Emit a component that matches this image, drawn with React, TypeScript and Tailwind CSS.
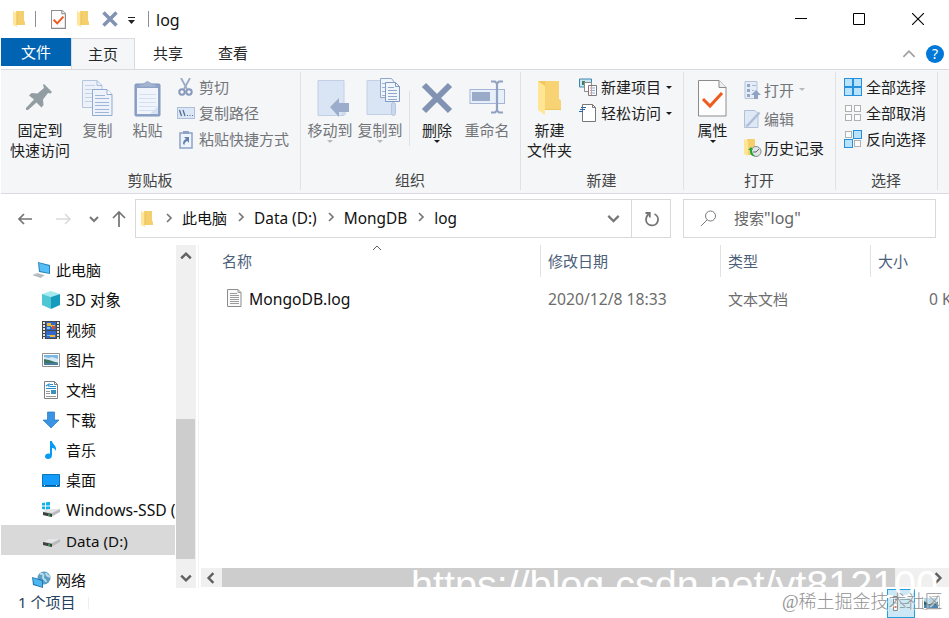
import type { ReactNode } from "react";
import clsx from "clsx";

type IconProps = { w: number; h: number; children: ReactNode; className?: string };

function Icon({ w, h, children, className }: IconProps) {
  return (
    <svg width={w} height={h} viewBox={`0 0 ${w} ${h}`} fill="none" className={clsx("block shrink-0", className)}>
      {children}
    </svg>
  );
}

/* ---------- shared glyphs ---------- */

function SmallFolder() {
  return (
    <Icon w={14} h={18}>
      <path d="M4 1h8v10l1 1v3H4z" fill="#f5cf6c" />
      <path d="M1 1l4 2v14l-4-2z" fill="#ffe69c" />
      <path d="M5 3v12" stroke="#e8bd55" />
    </Icon>
  );
}

function Caret({ dim }: { dim?: boolean }) {
  return (
    <Icon w={6} h={3}>
      <path d="M0 0h6L3 3z" fill={dim ? "#b6b8ba" : "#1c1c1c"} />
    </Icon>
  );
}

type ChevronProps = { dir: "up" | "down" | "left" | "right"; color?: string; size?: number; stroke?: number };

function Chevron({ dir, color = "#606060", size = 10, stroke = 2 }: ChevronProps) {
  const paths = {
    up: "M1 7l4-4 4 4",
    down: "M1 3l4 4 4-4",
    left: "M7 1L3 5l4 4",
    right: "M3 1l4 4-4 4",
  };
  return (
    <svg width={size} height={size} viewBox="0 0 10 10" fill="none" className="block shrink-0">
      <path d={paths[dir]} stroke={color} strokeWidth={stroke} />
    </svg>
  );
}

/* ---------- large ribbon icons ---------- */

const PinIcon = (
  <Icon w={28} h={28} className="-mt-px">
    <path d="M18 0l8 8-1.500 1.500L22 9l-5 6.500.500 5.500-2 2.500-5-5L2 26H0v-2l8-8.500-5-4L5.500 9l6 .500L18 4l-1-3z" fill="#929da3" />
  </Icon>
);

const CopyIcon = (
  <Icon w={31} h={37}>
    <path d="M.5.5H15l5 5v22H.5z" fill="#edf2fa" stroke="#b3c5df" />
    <path d="M15 .5v5h5" stroke="#a9bdd8" />
    <path d="M3 5.500h10M3 9.500h14M3 13.500h14M3 17.500h8M3 21.500h8" stroke="#c3d1e6" />
    <path d="M10.500 9.500H25l5 5v21H10.500z" fill="#eef3fb" stroke="#8fabd1" />
    <path d="M25 9.500v5h5" fill="#fff" stroke="#8fabd1" />
    <path d="M13 15.500h10M13 18.500h14M13 22.500h14M13 25.500h14M13 29.500h14M13 32.500h14" stroke="#9fb6d6" />
  </Icon>
);

const PasteIcon = (
  <Icon w={27} h={37}>
    <rect x="1" y="4" width="25" height="32" rx="1" fill="#8fa3c8" stroke="#8095bb" />
    <path d="M3 8h21v26H3z" fill="#f0f5fd" />
    <path d="M24 26v8h-8z" fill="#d6e1f2" />
    <path d="M5 14.500h17M5 18.500h17M5 22.500h17M5 26.500h17M5 30.500h17" stroke="#d4e0f1" />
    <path d="M5 7V5l4-1 2-1a3 3 0 015 0l2 1 4 1v2z" fill="#a4b5d2" stroke="#8da0c4" strokeWidth=".7" />
  </Icon>
);

const MoveIcon = (
  <Icon w={33} h={37} className="translate-x-[3px]">
    <path d="M1 .500h26v35H1z" fill="#d9e5f5" stroke="#c1d0e5" />
    <path d="M25 23h4v12h-4z" fill="#cddbee" />
    <path d="M13 27l9-9v5h10v9H22v5z" fill="#9badca" />
  </Icon>
);

const CopyToIcon = (
  <Icon w={34} h={39} className="-mt-[2px] translate-x-[3px]">
    <path d="M1 2.500h26v34H1z" fill="#d9e5f5" stroke="#c1d0e5" />
    <rect x="25.500" y="24.500" width="4" height="13" rx="2" fill="#c8d7eb" stroke="#b4c6df" />
    <path d="M14.500 .500h11l3 4v15h-14z" fill="#f0f5fc" stroke="#8fa7ca" />
    <path d="M16 5.500h4M16 9.500h3M16 13.500h3M16 17.500h3" stroke="#9eb3d2" />
    <path d="M19.500 4.500h10l4 4v15h-14z" fill="#f0f5fc" stroke="#7f99c0" />
    <path d="M29.500 4.500v4h4" stroke="#7f99c0" />
    <path d="M22 9.500h6M22 12.500h9M22 15.500h9M22 18.500h9M22 21.500h9" stroke="#8fa7ca" />
  </Icon>
);

const DeleteIcon = (
  <Icon w={32} h={32}>
    <path d="M3 3l26 26M29 3L3 29" stroke="#8192b3" strokeWidth="6" />
  </Icon>
);

const RenameIcon = (
  <Icon w={37} h={34} className="-mt-[2px]">
    <rect x="1" y="9.500" width="34.500" height="14" fill="#e7effb" stroke="#a5b5d3" />
    <rect x="3" y="12" width="18" height="9" fill="#9aabca" />
    <path d="M22 1.500h4l2 2 2-2h4M22 32.500h4l2-2 2 2h4M28 3v28" stroke="#91a1c0" strokeWidth="2.200" />
  </Icon>
);

const NewFolderIcon = (
  <Icon w={26} h={36}>
    <path d="M1 1h21v18l2 2v9H8l-1 4z" fill="#efc75f" />
    <path d="M8 1h14v18l2 2v8H8z" fill="#f7d373" />
    <path d="M1 1l7 5v29l-7-5z" fill="#ffe594" />
  </Icon>
);

function CheckSheet({ small }: { small?: boolean }) {
  return (
    <svg width={small ? 15 : 29} height={small ? 19 : 37} viewBox="0 0 29 37" fill="none" className="block">
      <path d="M.5.5h20.500l7 7v28.500H.5z" fill="#fdfdfd" stroke="#8c8c8c" strokeWidth={small ? 2.5 : 1} />
      <path d="M21 .500v7h7" fill="#eee" stroke="#8c8c8c" strokeWidth={small ? 2 : 1} />
      <path d="M5 19l7 7L24 13" stroke="#f05a1c" strokeWidth={small ? 4 : 3} />
    </svg>
  );
}

/* ---------- small ribbon icons ---------- */

const CutIcon = (
  <Icon w={18} h={18}>
    <path d="M4 0l6 11M13 0L7 11" stroke="#9baac4" strokeWidth="1.800" />
    <circle cx="5" cy="14" r="2.700" stroke="#8799bb" strokeWidth="2" />
    <circle cx="12" cy="14" r="2.700" stroke="#8799bb" strokeWidth="2" />
  </Icon>
);

const PathIcon = (
  <Icon w={18} h={12}>
    <rect x=".500" y=".500" width="17" height="11" fill="#dbe6f6" stroke="#afbed8" />
    <path d="M2.500 3l2 6M6 3l2 6" stroke="#566d96" strokeWidth="1.300" />
    <path d="M10 8.500h1M12.500 8.500h1M15 8.500h1" stroke="#566d96" />
  </Icon>
);

const ShortcutIcon = (
  <Icon w={18} h={19}>
    <path d="M3 3h12v15H3z" fill="#eef4fc" stroke="#8da2c6" strokeWidth="1.500" />
    <path d="M6 1h6v3H6z" fill="#8da2c6" />
    <path d="M6 14c0-3 1-4 3-5L7 7h5v6l-1.500-2C8 12 7.500 13 7.500 15z" fill="#6681b0" />
  </Icon>
);

const NewItemIcon = (
  <Icon w={18} h={18}>
    <path d="M.500 1h12v8H.500z" fill="#c8e6f4" stroke="#3f88ad" />
    <path d="M3 3h3v4H3z" fill="#477d63" />
    <path d="M5.500 4.500h7v9h-7z" fill="#fff" stroke="#8b8b8b" />
    <path d="M9.500 7.500h8v10h-8z" fill="#fff" stroke="#7a7a7a" />
    <path d="M11 10h5M11 12.500h5M11 15h5" stroke="#87a8d7" />
    <path d="M12.500 8v9" stroke="#e59a8b" />
  </Icon>
);

const EasyAccessIcon = (
  <Icon w={18} h={18}>
    <path d="M3.500 .500h10l3 3v14h-13z" fill="#fff" stroke="#777" />
    <path d="M13.500.500v3h3" stroke="#777" />
    <path d="M2 3.500h5M1 5.500h5M0 7.500h4" stroke="#2868a8" />
  </Icon>
);

const OpenIcon = (
  <Icon w={18} h={18}>
    <path d="M1 .500h12v17H1z" fill="#e5edf9" stroke="#b6c3d9" />
    <path d="M3 3h3v3H3zM3 8h3v3H3zM3 13h3v3H3z" fill="#94a6c6" />
    <path d="M8 4.500h4M8 9.500h2" stroke="#a9b8d1" />
    <path d="M12 9l5 5h-3v4h-4v-4H7z" fill="#8fa2c4" />
  </Icon>
);

const EditIcon = (
  <Icon w={18} h={18}>
    <path d="M.500.500H11l3 3v14H.500z" fill="#dfe8f5" stroke="#b1c0d8" />
    <path d="M15.500 2.500L4 15l-2 1" stroke="#b0bfd8" strokeWidth="2.500" />
  </Icon>
);

const HistoryIcon = (
  <Icon w={18} h={18}>
    <path d="M3 0h8v16H3z" fill="#f5cf6c" />
    <path d="M0 0l4 2v15l-4-2z" fill="#ffe594" />
    <circle cx="12" cy="12.500" r="5" fill="#e1e5e6" stroke="#858b8e" />
    <path d="M12 13l3-3M12 13H9" stroke="#666" />
    <path d="M4 11l3-3 2 3H8c0 3 1 4 3 6-4 0-5-2-5-6z" fill="#21a33a" />
  </Icon>
);

// four tiles, each either highlighted or plain
function TilesIcon({ on }: { on: boolean[] }) {
  return (
    <Icon w={18} h={18}>
      {on.map((active, i) => {
        const x = (i % 2) * 9 + (active ? 0.5 : 1.5);
        const y = Math.floor(i / 2) * 9 + (active ? 0.5 : 1.5);
        const size = active ? 8 : 6;
        return <rect key={i} x={x} y={y} width={size} height={size} fill={active ? "#b9e2fc" : "#fcfcfc"} stroke={active ? "#2690dd" : "#b0b0b0"} />;
      })}
    </Icon>
  );
}

/* ---------- ribbon ---------- */

type BigProps = { icon: ReactNode; lines: string[]; caret?: boolean; dim?: boolean; className?: string };

function BigButton({ icon, lines, caret, dim, className }: BigProps) {
  return (
    <button className={clsx("flex shrink-0 flex-col items-center", dim ? "text-[#737578]" : "text-[#1e1e1e]", className)}>
      <span className="mb-px flex h-[42px] items-center">{icon}</span>
      {lines.map((l) => (
        <span key={l} className="block h-5 leading-5 whitespace-nowrap">{l}</span>
      ))}
      {caret && <Caret dim={dim} />}
    </button>
  );
}

type SmallProps = { icon: ReactNode; label: string; caret?: boolean; dim?: boolean; tall?: boolean };

function SmallButton({ icon, label, caret, dim, tall }: SmallProps) {
  return (
    <button className={clsx("flex items-center whitespace-nowrap", tall ? "h-[29px]" : "h-[26px]", dim ? "text-[#737578]" : "text-[#1e1e1e]")}>
      <span className={clsx("flex w-[18px] justify-center", tall ? "mr-[2px]" : "mr-1")}>{icon}</span>
      <span className="leading-5">{label}</span>
      {caret && <span className="ml-[5px]"><Caret dim={dim} /></span>}
    </button>
  );
}

function Group({ title, className, children }: { title: string; className: string; children: ReactNode }) {
  return (
    <section className={clsx("flex h-[118px] shrink-0 flex-col border-r border-[#dfe1e4]", className)}>
      <div className="flex h-[98px] items-start">{children}</div>
      <div className="pr-px text-center leading-5 text-[#444]">{title}</div>
    </section>
  );
}

function Ribbon() {
  return (
    <div className="flex h-[125px] border-y border-[#d9dbde] bg-[#f4f6f8] pt-[2px]">
      <Group title="剪贴板" className="w-[300px]">
        <BigButton className="mt-[5px] ml-[5px] w-[68px]" icon={PinIcon} lines={["固定到", "快速访问"]} />
        <BigButton className="mt-[5px] -ml-px w-[49px]" icon={CopyIcon} lines={["复制"]} dim />
        <BigButton className="mt-[5px] w-[51px]" icon={PasteIcon} lines={["粘贴"]} dim />
        <div className="mt-[2px] ml-1">
          <SmallButton icon={CutIcon} label="剪切" dim />
          <SmallButton icon={PathIcon} label="复制路径" dim />
          <SmallButton icon={ShortcutIcon} label="粘贴快捷方式" dim />
        </div>
      </Group>
      <Group title="组织" className="w-[220px]">
        <BigButton className="mt-[5px] ml-1 w-[50px]" icon={MoveIcon} lines={["移动到"]} caret dim />
        <BigButton className="mt-[5px] w-[50px]" icon={CopyToIcon} lines={["复制到"]} caret dim />
        <div className="mt-[19px] ml-1 h-[55px] w-px bg-[#dfe1e4]" />
        <BigButton className="mt-[5px] ml-[2px] w-[50px]" icon={DeleteIcon} lines={["删除"]} caret />
        <BigButton className="mt-[5px] w-[50px]" icon={RenameIcon} lines={["重命名"]} dim />
      </Group>
      <Group title="新建" className="w-[163px]">
        <BigButton className="mt-[5px] w-[57px]" icon={NewFolderIcon} lines={["新建", "文件夹"]} />
        <div className="mt-[2px] ml-[1px]">
          <SmallButton icon={NewItemIcon} label="新建项目" caret />
          <SmallButton icon={EasyAccessIcon} label="轻松访问" caret />
        </div>
      </Group>
      <Group title="打开" className="w-[152px]">
        <BigButton className="mt-[5px] w-[57px]" icon={<CheckSheet />} lines={["属性"]} caret />
        <div className="mt-[3px] ml-[3px]">
          <SmallButton icon={OpenIcon} label="打开" caret dim tall />
          <SmallButton icon={EditIcon} label="编辑" dim tall />
          <SmallButton icon={HistoryIcon} label="历史记录" tall />
        </div>
      </Group>
      <Group title="选择" className="w-[102px]">
        <div className="mt-[2px] ml-2">
          <SmallButton icon={<TilesIcon on={[true, true, true, true]} />} label="全部选择" />
          <SmallButton icon={<TilesIcon on={[false, false, false, false]} />} label="全部取消" />
          <SmallButton icon={<TilesIcon on={[false, true, true, false]} />} label="反向选择" />
        </div>
      </Group>
    </div>
  );
}

/* ---------- title bar and tabs ---------- */

function TitleBar() {
  return (
    <header className="flex h-[38px] items-center pl-[11px]">
      <SmallFolder />
      <span className="ml-[9px] h-4 w-px bg-[#8f8f8f]" />
      <span className="ml-[15px]"><CheckSheet small /></span>
      <span className="ml-[10px]"><SmallFolder /></span>
      <Icon w={16} h={16} className="ml-3">
        <path d="M1.500 1.500l13 13M14.500 1.500l-13 13" stroke="#8192b3" strokeWidth="3.500" />
      </Icon>
      <Icon w={7} h={8} className="mt-1 ml-[10px]">
        <path d="M0 .500h7" stroke="#222" />
        <path d="M0 3h7L3.500 7z" fill="#222" />
      </Icon>
      <span className="ml-[13px] h-4 w-px bg-[#8f8f8f]" />
      <span className="ml-[7px] pt-px text-base text-[#111]">log</span>
      <div className="ml-auto flex items-center">
        <Icon w={12} h={12}>
          <path d="M0 5.500h12" stroke="#000" />
        </Icon>
        <Icon w={12} h={12} className="ml-[46px]">
          <path d="M.500.500h11v11H.500z" stroke="#000" />
        </Icon>
        <Icon w={12} h={12} className="mr-[25px] ml-[47px]">
          <path d="M0 0l12 12M12 0L0 12" stroke="#000" strokeWidth="1.100" />
        </Icon>
      </div>
    </header>
  );
}

function Tabs() {
  return (
    <nav className="flex h-[31px] text-[#262626]">
      <div className="flex h-7 w-[70px] items-center justify-center bg-[#0064b3] text-white">文件</div>
      <div className="-mb-px flex h-8 w-[64px] items-center justify-center border border-b-0 border-[#d9dbde] bg-[#f4f6f8]">主页</div>
      <div className="flex w-[66px] items-center justify-center">共享</div>
      <div className="flex w-[64px] items-center justify-center">查看</div>
      <div className="ml-auto flex items-center pr-[5px]">
        <Chevron dir="up" size={14} color="#a0a0a0" stroke={1.2} />
        <span className="ml-[10px] flex size-[18px] items-center justify-center rounded-full bg-[#0078d7] text-sm leading-none text-white">?</span>
      </div>
    </nav>
  );
}

/* ---------- address bar ---------- */

const CRUMBS = ["此电脑", "Data (D:)", "MongDB", "log"];

function AddressBar() {
  return (
    <div className="flex h-[39px] items-center pr-[13px]">
      <div className="flex w-[134px] items-center">
        <Icon w={16} h={14} className="ml-4">
          <path d="M15 7H2M7 2L2 7l5 5" stroke="#737373" strokeWidth="1.700" />
        </Icon>
        <Icon w={16} h={14} className="ml-[23px]">
          <path d="M0 7h14M9 2l5 5-5 5" stroke="#dadada" strokeWidth="1.500" />
        </Icon>
        <span className="ml-[17px]"><Chevron dir="down" color="#777" /></span>
        <Icon w={14} h={16} className="mt-px ml-[13px]">
          <path d="M7 16V1M1 7l6-6 6 6" stroke="#737373" strokeWidth="1.700" />
        </Icon>
      </div>
      <div className="flex h-[39px] w-[536px] border border-[#d9d9d9]">
        <div className="flex flex-1 items-center pl-1 text-[#111]">
          <SmallFolder />
          {CRUMBS.map((c, i) => (
            <span key={c} className={clsx("flex items-center whitespace-nowrap", i === 0 && "pl-px")}>
              <span className="-mt-[2px] mr-[8px] ml-[9px]"><Chevron dir="right" color="#777" stroke={1.7} /></span>
              <span className={i === 0 ? "text-[15px]" : "pt-px text-[15.4px]"}>{c}</span>
            </span>
          ))}
          <span className="mr-[11px] ml-auto"><Chevron dir="down" size={13} color="#777" stroke={1.7} /></span>
        </div>
        <div className="flex w-[39px] items-center justify-center border-l border-[#d9d9d9]">
          <Icon w={16} h={16} className="ml-[2px]">
            <path d="M10.500 3A6 6 0 112 8.500C2 6.500 3 4.500 4.500 3M1.500 2h4.300v4.500" stroke="#737373" strokeWidth="1.800" />
          </Icon>
        </div>
      </div>
      <div className="ml-3 flex h-[39px] flex-1 items-center border border-[#d9d9d9] pl-4 text-[#666]">
        <Icon w={17} h={17}>
          <circle cx="10.500" cy="6" r="5" stroke="#7a7a7a" />
          <path d="M7 10L1 16" stroke="#7a7a7a" />
        </Icon>
        <span className="-mt-px ml-[17px]">搜索<span className="text-base">"log"</span></span>
      </div>
    </div>
  );
}

/* ---------- navigation tree ---------- */

const Drive = (
  <>
    <path d="M1 11l5-3h12v3l-9 5-8-2z" fill="#b9bcbd" />
    <path d="M1 11l5-3h12l-8 4z" fill="#e4e5e6" />
    <path d="M1 11l9 2v3l-9-2z" fill="#3c4244" />
    <path d="M6 14h2" stroke="#39e34b" />
  </>
);

const Screen = (
  <>
    <path d="M6 1l12 3v9L7 11z" fill="#2784bb" />
    <path d="M7 2l10 3v7L8 10z" fill="#55bdf7" />
  </>
);

type TreeItem = { label: string; icon: ReactNode; root?: boolean; selected?: boolean; className?: string };

const TREE: TreeItem[] = [
  {
    label: "此电脑",
    root: true,
    icon: (
      <Icon w={19} h={18}>
        {Screen}
        <path d="M0 14l5-2 8 2-4 3z" fill="#c8cdd0" />
        <path d="M2 14l7 2M5 13l6 2" stroke="#929ba0" strokeWidth=".6" />
      </Icon>
    ),
  },
  {
    label: "3D 对象",
    className: "pt-px text-[15.4px]",
    icon: (
      <Icon w={18} h={18}>
        <path d="M0 3l9-3 9 3-9 3z" fill="#a3eaf0" />
        <path d="M0 3l9 3v12l-9-4z" fill="#4ec6d4" />
        <path d="M9 6l9-3v11l-9 4z" fill="#159cbd" />
      </Icon>
    ),
  },
  {
    label: "视频",
    icon: (
      <Icon w={18} h={18}>
        <path d="M0 0h18v18H0z" fill="#44474a" />
        <path d="M2 1v17M16 1v17" stroke="#e5e5e5" strokeWidth="2" strokeDasharray="2 1" />
        <path d="M4 1h10v8H4zM4 10h10v7H4z" fill="#3468c8" />
        <path d="M5 2h4v3H5zM9 4h4v2H9zM8 14h5v2H8z" fill="#f0ba28" />
        <path d="M10 5h3v3h-3z" fill="#d64f2e" />
        <path d="M5 6h3v2H5zM5 14h3v1H5z" fill="#72c6e8" />
      </Icon>
    ),
  },
  {
    label: "图片",
    icon: (
      <Icon w={18} h={14}>
        <path d="M.500.500h17v13H.500z" fill="#fff" stroke="#929292" />
        <path d="M2 2h14v10H2z" fill="#7ab7e5" />
        <path d="M2 4l5 1 3-1 6 2v3H2z" fill="#d7eaf6" />
        <path d="M2 6l5 1 9 3v1H2z" fill="#3c7467" />
        <path d="M2 10h14v2H2z" fill="#497da0" />
      </Icon>
    ),
  },
  {
    label: "文档",
    icon: (
      <Icon w={18} h={18}>
        <path d="M2.500 .500h10l3 3v14h-13z" fill="#fff" stroke="#808080" />
        <path d="M12.500.500v3h3" stroke="#808080" />
        <path d="M4 5l3-2v3M8 3.500h3M8 5.500h6M4 7.500h10" stroke="#258dd1" strokeWidth="1.200" />
        <path d="M4 10.500h4M4 12.500h4M4 15.500h10" stroke="#999" />
        <path d="M9 9h5v4H9z" fill="#3d90bc" />
      </Icon>
    ),
  },
  {
    label: "下载",
    icon: (
      <Icon w={18} h={18}>
        <path d="M5.500 1h7v8h4.500l-8 8-8-8h4.500z" fill="#3a94e3" stroke="#2479bf" strokeWidth=".7" />
      </Icon>
    ),
  },
  {
    label: "音乐",
    icon: (
      <Icon w={18} h={18}>
        <path d="M8 0h2c0 3 5 4 4 10-1-2-2-3-4-3v7c0 3-2 4-4 4s-3-1-3-2.500C3 13 6 12 8 13z" fill="#079bf3" />
      </Icon>
    ),
  },
  {
    label: "桌面",
    icon: (
      <Icon w={18} h={13}>
        <path d="M.500.500h17v12H.500z" fill="#159cfa" stroke="#0878bd" />
        <path d="M1 11.500h16" stroke="#075d99" />
        <path d="M2 11.500h1M14 11.500h1" stroke="#fff" />
      </Icon>
    ),
  },
  {
    label: "Windows-SSD (C:)",
    className: "pt-[2px] text-[15.7px]",
    icon: (
      <Icon w={19} h={18}>
        <path d="M0 2l3-.500v3H0zM4 1.300L8 1v3.500H4zM0 5.500h3v3L0 8zM4 5.500h4V9l-4-.400z" fill="#0eb3e9" />
        {Drive}
      </Icon>
    ),
  },
  { label: "Data (D:)", className: "pt-[2px] text-[15.2px]", selected: true, icon: <Icon w={19} h={18}>{Drive}</Icon> },
  {
    label: "网络",
    root: true,
    icon: (
      <Icon w={19} h={18}>
        <circle cx="12" cy="7" r="6.500" fill="#5b9fc4" />
        <path d="M8 3c3-1 4 1 3 3s3 2 3 5M14 2c0 3 3 3 4 4" stroke="#b9dceb" strokeWidth="2" />
        <path d="M0 6l11 3v8L1 14z" fill="#2377b1" />
        <path d="M1 7l9 3v6L2 13z" fill="#4cb6f0" />
      </Icon>
    ),
  },
];

function Tree() {
  return (
    <aside className="h-[343px] w-[174px] shrink-0 overflow-hidden pt-[10px] text-[#101010]">
      {TREE.map((t) => (
        <div
          key={t.label}
          className={clsx(
            "flex h-[30px] items-center whitespace-nowrap",
            t.root ? "pl-[31px]" : "pl-10",
            t.selected && "mb-[10px] bg-[#d9d9d9]",
          )}
        >
          <span className={clsx("flex w-[19px] shrink-0", t.root ? "mr-[5px]" : "mr-[6px] pl-px")}>{t.icon}</span>
          <span className={t.className}>{t.label}</span>
        </div>
      ))}
    </aside>
  );
}

function VerticalScrollbar() {
  return (
    <div className="ml-px flex h-[343px] w-5 shrink-0 flex-col bg-[#f0f0f0]">
      <div className="flex h-[21px] w-[19px] items-center justify-center"><Chevron dir="up" size={12} /></div>
      <div className="mt-[153px] h-[140px] w-[19px] bg-[#cdcdcd]" />
      <div className="mt-auto flex h-[21px] w-[19px] items-center justify-center"><Chevron dir="down" size={12} /></div>
    </div>
  );
}

/* ---------- file list ---------- */

function FileList() {
  return (
    <main className="ml-[2px] flex min-w-0 flex-1 flex-col overflow-hidden border-l border-[#f2f2f2] whitespace-nowrap">
      <div className="relative flex h-8 items-center text-[#4c607a]">
        <div className="w-[341px] pl-[23px]">名称</div>
        <div className="flex h-8 w-[180px] items-center border-l border-[#e2e2e2] pl-[7px]">修改日期</div>
        <div className="flex h-8 w-[150px] items-center border-l border-[#e2e2e2] pl-[7px]">类型</div>
        <div className="flex h-8 items-center border-l border-[#e2e2e2] pl-[7px]">大小</div>
        {/* sort direction marker sits on top of the name column */}
        <span className="absolute top-[-2px] left-[173px]"><Chevron dir="up" stroke={1} /></span>
      </div>
      <div className="mt-[7px] flex h-[30px] items-center text-[#6d6d6d]">
        <div className="flex w-[341px] shrink-0 items-center pl-[28px] text-[#101010]">
          <Icon w={15} h={18} className="-mt-[2px]">
            <path d="M.500.500H11l3 3v14H.500z" fill="#fafafa" stroke="#8c8c8c" />
            <path d="M11 .500v3h3M3 4.500h7M3 6.500h9M3 8.500h9M3 10.500h9M3 12.500h9M3 14.500h9" stroke="#9b9b9b" />
          </Icon>
          <span className="ml-[7px] pt-[2px] text-[15.7px]">MongoDB.log</span>
        </div>
        <div className="w-[180px] shrink-0 pt-[2px] pl-2 text-[15.7px]">2020/12/8 18:33</div>
        <div className="w-[150px] shrink-0 pl-2">文本文档</div>
        <div className="shrink-0 pt-[2px] pl-[59px] text-[15.7px]">0 KB</div>
      </div>
      <div className="mt-auto flex h-[19px] shrink-0 bg-[#f0f0f0]">
        <div className="flex w-[23px] items-center justify-center border-l-2 border-white pr-[2px]"><Chevron dir="left" size={12} /></div>
        <div className="w-[673px] bg-[#cdcdcd]" />
        <div className="ml-auto flex items-center pr-[5px]"><Chevron dir="right" size={12} /></div>
      </div>
      <div className="h-px shrink-0" />
    </main>
  );
}

function StatusBar() {
  return (
    <footer className="flex h-[30px] items-center pl-[17px] text-[#24415f]">
      <span className="-mt-[2px] leading-5">1 个项目</span>
      <span className="ml-[13px] h-3 w-px bg-[#eee]" />
      <div className="ml-auto flex items-center pr-[9px]">
        <div className="flex h-[29px] w-[28px] items-center justify-center border border-[#26a0da] bg-[#cce8f6]">
          <Icon w={17} h={15}>
            <path d="M.500.500h4v14h-4z" fill="#fff" stroke="#888" />
            <path d="M1.500 3h2M1.500 7h2" stroke="#3b82b5" strokeWidth="1.500" />
            <path d="M1.500 11h2" stroke="#ce5335" strokeWidth="1.500" />
            <path d="M7 3.500h10M7 7.500h10M7 11.500h10" stroke="#8ca3ac" />
          </Icon>
        </div>
        <Icon w={18} h={14} className="ml-[7px]">
          <path d="M.500.500h17v13H.500z" fill="#fff" stroke="#bbb" />
          <path d="M2 2h14v5H2z" fill="#b5d8ec" />
          <path d="M2 5l5 3 9-2v5H2z" fill="#35666b" />
          <path d="M2 9h14v3H2z" fill="#4c82ad" />
        </Icon>
      </div>
    </footer>
  );
}

export default function App() {
  return (
    <div className="relative flex h-[618px] w-[949px] flex-col overflow-hidden bg-white pl-px font-['Noto_Sans','Noto_Sans_CJK_SC',sans-serif] text-[15px]">
      <TitleBar />
      <Tabs />
      <Ribbon />
      <div className="h-[5px] shrink-0" />
      <AddressBar />
      <div className="h-[7px] shrink-0" />
      <div className="flex h-[343px] shrink-0">
        <Tree />
        <VerticalScrollbar />
        <FileList />
      </div>
      <StatusBar />
      <div className="pointer-events-none absolute top-[562px] left-[411px] font-['Liberation_Sans',sans-serif] text-[39.5px] leading-[44px] whitespace-nowrap text-white">
        https://blog.csdn.net/yt812100
      </div>
      <div className="pointer-events-none absolute top-[589px] left-[782px] font-['Liberation_Serif','Noto_Sans_CJK_SC',serif] text-[18px] leading-[26px] font-light whitespace-nowrap text-[#929292] [text-shadow:1px_1px_1px_#fff]">
        @稀土掘金技术社区
      </div>
    </div>
  );
}
